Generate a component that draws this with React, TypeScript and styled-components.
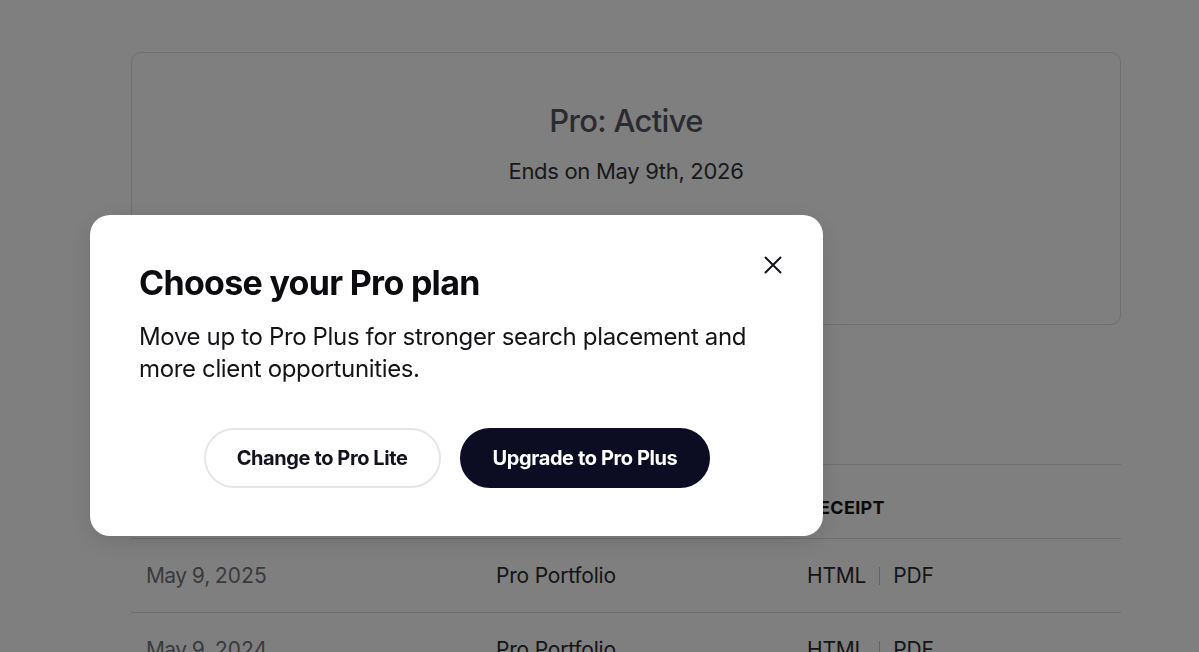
import styled, { createGlobalStyle } from "styled-components";

const GlobalStyle = createGlobalStyle`
  html, body {
    margin: 0;
    padding: 0;
    background: #ffffff;
    font-family: Inter, "Liberation Sans", sans-serif;
    color: #1b1b1f;
  }
  * {
    box-sizing: border-box;
  }
`;

const payments = [
  { date: "May 9, 2025", item: "Pro Portfolio" },
  { date: "May 9, 2024", item: "Pro Portfolio" },
];

const App: React.FC = () => {
  return (
    <>
      <GlobalStyle />
      <Page>
        <StatusCard>
          <PlanTitle>Pro: Active</PlanTitle>
          <PlanEnds>Ends on May 9th, 2026</PlanEnds>
        </StatusCard>

        <Table>
          <HeaderRow>
            <HeaderCell>Date</HeaderCell>
            <HeaderCell>Description</HeaderCell>
            <HeaderCell>Receipt</HeaderCell>
          </HeaderRow>
          {payments.map((p, i) => (
            <Row key={i}>
              <DateCell>{p.date}</DateCell>
              <Cell>{p.item}</Cell>
              <Cell>
                <ReceiptLink>HTML</ReceiptLink>
                <Divider />
                <ReceiptLink>PDF</ReceiptLink>
              </Cell>
            </Row>
          ))}
        </Table>
      </Page>

      <Overlay>
        <Modal>
          <CloseButton aria-label="Close">
            <svg width="18" height="18" viewBox="0 0 18 18" fill="none">
              <path
                d="M1.5 1.5L16.5 16.5M16.5 1.5L1.5 16.5"
                stroke="#15151c"
                strokeWidth="2"
                strokeLinecap="round"
              />
            </svg>
          </CloseButton>
          <ModalTitle>Choose your Pro plan</ModalTitle>
          <ModalText>
            Move up to Pro Plus for stronger search placement and more client
            opportunities.
          </ModalText>
          <Actions>
            <PillButton>Change to Pro Lite</PillButton>
            <PillButton primary>Upgrade to Pro Plus</PillButton>
          </Actions>
        </Modal>
      </Overlay>
    </>
  );
};

export default App;

const Page = styled.div`
  padding: 52px 78px 0 131px;
  display: flex;
  flex-direction: column;
`;

const StatusCard = styled.div`
  height: 273px;
  border: 1px solid #dedede;
  border-radius: 10px;
  display: flex;
  flex-direction: column;
  align-items: center;
  padding-top: 48px;
`;

const PlanTitle = styled.div`
  font-size: 31px;
  line-height: 40px;
  font-weight: 500;
  color: #56565e;
  letter-spacing: -0.7px;
`;

const PlanEnds = styled.div`
  margin-top: 15px;
  font-size: 22px;
  line-height: 30px;
  color: #333338;
  letter-spacing: -0.3px;
`;

const Table = styled.div`
  margin-top: 139px;
  display: flex;
  flex-direction: column;
  border-top: 1px solid #dcdcdc;
`;

const HeaderRow = styled.div`
  display: grid;
  grid-template-columns: 350px 311px 1fr;
  align-items: center;
  height: 74px;
  padding: 12px 0 0 15px;
  border-bottom: 1px solid #dcdcdc;
`;

const HeaderCell = styled.div`
  font-size: 18px;
  font-weight: 700;
  text-transform: uppercase;
  letter-spacing: 0.3px;
  color: #141416;
`;

const Row = styled.div`
  display: grid;
  grid-template-columns: 350px 311px 1fr;
  align-items: center;
  height: 74px;
  padding: 0 0 0 15px;
  border-bottom: 1px solid #dcdcdc;
`;

const Cell = styled.div`
  display: flex;
  align-items: center;
  font-size: 21px;
  color: #2a2a2e;
  letter-spacing: -0.2px;
`;

const DateCell = styled(Cell)`
  color: #75757c;
  letter-spacing: -0.6px;
  font-variant-numeric: tabular-nums;
`;

const ReceiptLink = styled.span`
  color: #2a2a2e;
`;

const Divider = styled.span`
  width: 1px;
  height: 18px;
  margin: 0 13px;
  background: #c8c8c8;
`;

const Overlay = styled.div`
  position: fixed;
  inset: 0;
  background: rgba(0, 0, 0, 0.5);
  padding: 215px 0 0 90px;
`;

const Modal = styled.div`
  position: relative;
  width: 733px;
  background: #ffffff;
  border-radius: 20px;
  padding: 47px 48px 48px 49px;
  box-shadow: 0 6px 24px rgba(0, 0, 0, 0.12);
`;

const CloseButton = styled.button`
  position: absolute;
  top: 35px;
  right: 35px;
  width: 30px;
  height: 30px;
  padding: 0;
  border: none;
  background: transparent;
  display: flex;
  align-items: center;
  justify-content: center;
  cursor: pointer;
`;

const ModalTitle = styled.h1`
  margin: 0;
  font-size: 34px;
  line-height: 41px;
  font-weight: 700;
  letter-spacing: -0.7px;
  color: #0b0b10;
`;

const ModalText = styled.p`
  margin: 18px 0 0;
  font-size: 24px;
  line-height: 32px;
  letter-spacing: -0.35px;
  color: #141418;
`;

const Actions = styled.div`
  margin-top: 43px;
  display: flex;
  justify-content: center;
  gap: 19px;
`;

const PillButton = styled.button<{ primary?: boolean }>`
  height: 60px;
  padding: 0 31px;
  border-radius: 30px;
  font: 700 20px Inter, "Liberation Sans", sans-serif;
  letter-spacing: -0.4px;
  cursor: pointer;
  border: 2px solid ${({ primary }) => (primary ? "#0c0c22" : "#e6e6e6")};
  background: ${({ primary }) => (primary ? "#0c0c22" : "#ffffff")};
  color: ${({ primary }) => (primary ? "#ffffff" : "#13131f")};
`;
